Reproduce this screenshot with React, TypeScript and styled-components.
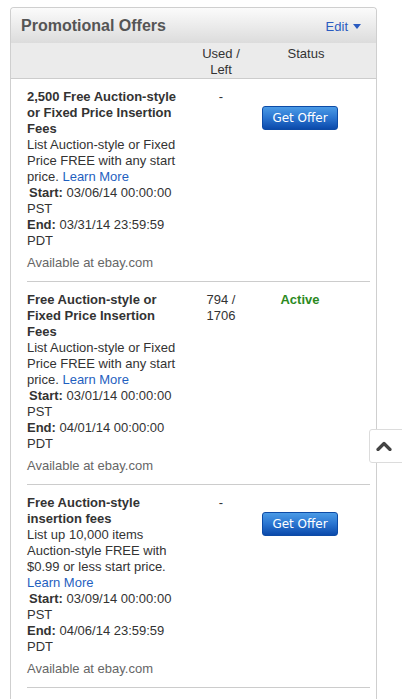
import React from "react";
import styled, { createGlobalStyle } from "styled-components";

const Global = createGlobalStyle`
  html, body { margin: 0; padding: 0; background: #fff; }
  body { font-family: "Liberation Sans", Arial, sans-serif; font-size: 13px; color: #333; }
  * { box-sizing: border-box; }
`;

const Page = styled.div`
  padding: 7px 0 0 10px;
`;

const Panel = styled.section`
  width: 367px;
  border: 1px solid #cfcfcf;
  border-bottom: none;
  border-radius: 4px 4px 0 0;
  padding-bottom: 30px;
`;

const Header = styled.div`
  height: 35px;
  display: flex;
  align-items: center;
  justify-content: space-between;
  padding: 0 15px 0 10px;
  background: linear-gradient(#fbfbfb, #dcdcdc);
  border-radius: 4px 4px 0 0;
`;

const Title = styled.h2`
  margin: 0;
  font-size: 16px;
  font-weight: bold;
  color: #555;
`;

const Edit = styled.a`
  display: flex;
  align-items: center;
  gap: 5px;
  color: #2a5bc0;
  font-size: 13px;
  text-decoration: none;
  padding-top: 1px;
`;

const Caret = styled.span`
  width: 0;
  height: 0;
  border-left: 4px solid transparent;
  border-right: 4px solid transparent;
  border-top: 5px solid #2a5bc0;
`;

const Columns = styled.div`
  display: grid;
  grid-template-columns: 156px 76px 82px;
  padding: 3px 0 0 16px;
  height: 36px;
  background: #ebebeb;
  border-bottom: 1px solid #cccccc;
  line-height: 16px;
  color: #333;
`;

const ColHead = styled.div<{ $shift?: number }>`
  text-align: center;
  padding-left: ${(p) => p.$shift ?? 0}px;
`;

const Row = styled.div`
  display: grid;
  grid-template-columns: 156px 76px 82px;
  margin: 0 6px 0 16px;
  padding: 10px 0;
  border-bottom: 1px solid #cccccc;
  line-height: 16px;
`;

const Info = styled.div`
  color: #333;
`;

const OfferName = styled.div`
  font-weight: bold;
`;

const Link = styled.a`
  color: #1f5fbf;
  text-decoration: none;
`;

const DateLine = styled.div<{ $indent?: boolean }>`
  b {
    font-weight: bold;
    margin-left: ${(p) => (p.$indent ? 2 : 0)}px;
  }
`;

const Avail = styled.div`
  margin-top: 6px;
  color: #666;
`;

const Used = styled.div`
  text-align: center;
`;

const Status = styled.div`
  display: flex;
  flex-direction: column;
  align-items: center;
`;

const Active = styled.span`
  color: #2b8a1e;
  font-weight: bold;
`;

const OfferButton = styled.button`
  margin-top: 17px;
  width: 76px;
  height: 24px;
  border: 1px solid #0d4ba6;
  border-radius: 3px;
  background: linear-gradient(#4b9be6, #2a74d0 50%, #0b4aab);
  color: #fff;
  font-family: "DejaVu Sans", Verdana, sans-serif;
  font-size: 12px;
  padding: 0;
  cursor: pointer;
`;

const ScrollTop = styled.button`
  position: fixed;
  left: 369px;
  top: 429px;
  width: 40px;
  height: 34px;
  background: #fff;
  border: 1px solid #dcdcdc;
  border-radius: 3px;
  display: flex;
  align-items: center;
  justify-content: flex-start;
  padding: 0 0 0 6px;
  cursor: pointer;
`;

type Offer = {
  name: string;
  desc: string;
  start: string;
  end: string;
  used: string[];
  active: boolean;
};

const offers: Offer[] = [
  {
    name: "2,500 Free Auction-style or Fixed Price Insertion Fees",
    desc: "List Auction-style or Fixed Price FREE with any start price.",
    start: "03/06/14 00:00:00 PST",
    end: "03/31/14 23:59:59 PDT",
    used: ["-"],
    active: false,
  },
  {
    name: "Free Auction-style or Fixed Price Insertion Fees",
    desc: "List Auction-style or Fixed Price FREE with any start price.",
    start: "03/01/14 00:00:00 PST",
    end: "04/01/14 00:00:00 PDT",
    used: ["794 /", "1706"],
    active: true,
  },
  {
    name: "Free Auction-style insertion fees",
    desc: "List up 10,000 items Auction-style FREE with $0.99 or less start price.",
    start: "03/09/14 00:00:00 PST",
    end: "04/06/14 23:59:59 PDT",
    used: ["-"],
    active: false,
  },
];

export default function App() {
  return (
    <Page>
      <Global />
      <Panel>
        <Header>
          <Title>Promotional Offers</Title>
          <Edit href="#">
            Edit <Caret />
          </Edit>
        </Header>
        <Columns>
          <div />
          <ColHead>
            Used /<br />
            Left
          </ColHead>
          <ColHead $shift={12}>Status</ColHead>
        </Columns>
        {offers.map((o, i) => (
          <Row key={i}>
            <Info>
              <OfferName>{o.name}</OfferName>
              <div>
                {o.desc} <Link href="#">Learn More</Link>
              </div>
              <DateLine $indent>
                <b>Start:</b> {o.start}
              </DateLine>
              <DateLine>
                <b>End:</b> {o.end}
              </DateLine>
              <Avail>Available at ebay.com</Avail>
            </Info>
            <Used>
              {o.used.map((u, j) => (
                <div key={j}>{u}</div>
              ))}
            </Used>
            <Status>
              {o.active ? <Active>Active</Active> : <OfferButton>Get Offer</OfferButton>}
            </Status>
          </Row>
        ))}
      </Panel>
      <ScrollTop aria-label="Back to top">
        <svg width="16" height="10" viewBox="0 0 16 10">
          <path d="M2 8.5 L8 2.5 L14 8.5" fill="none" stroke="#444" strokeWidth="3.2" strokeLinecap="round" strokeLinejoin="round" />
        </svg>
      </ScrollTop>
    </Page>
  );
}
